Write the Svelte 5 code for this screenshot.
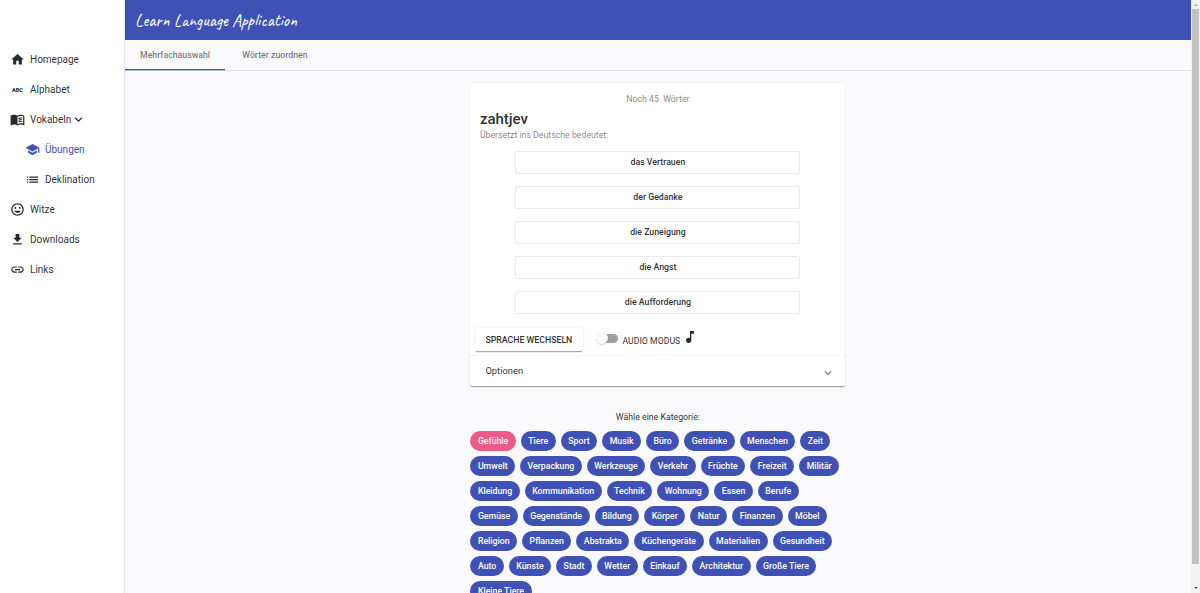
<script>
  const nav = [
    { label: 'Homepage', icon: 'home' },
    { label: 'Alphabet', icon: 'abc' },
    { label: 'Vokabeln', icon: 'book', open: true },
    { label: 'Übungen', icon: 'school', sub: true, active: true },
    { label: 'Deklination', icon: 'list', sub: true },
    { label: 'Witze', icon: 'smile' },
    { label: 'Downloads', icon: 'download' },
    { label: 'Links', icon: 'link' }
  ];
  const icons = {
    home: 'M10 20v-6h4v6h5v-8h3L12 3 2 12h3v8z',
    book: 'M21 5c-1.11-.35-2.33-.5-3.5-.5-1.95 0-4.05.4-5.5 1.5-1.45-1.1-3.55-1.5-5.5-1.5S2.450 4.900 1 6v14.650c0 .25.25.5.5.5.1 0 .15-.05.25-.05C3.100 20.450 5.050 20 6.500 20c1.950 0 4.050.4 5.500 1.500 1.350-.85 3.800-1.500 5.500-1.500 1.650 0 3.350.3 4.750 1.050.1.050.150.050.250.050.250 0 .5-.25.5-.5V6c-.6-.45-1.250-.75-2-1zm0 13.500c-1.100-.35-2.300-.5-3.500-.5-1.700 0-4.150.65-5.500 1.500V8c1.350-.85 3.800-1.500 5.500-1.500 1.200 0 2.400.15 3.500.5v11.500zM13.500 9.500c1.700-.8 4-1 6-.6V10.400c-2-.4-4.200-.1-6 .7zm0 2.700c1.700-.8 4-1 6-.6v1.500c-2-.4-4.200-.1-6 .7zm0 2.700c1.700-.8 4-1 6-.6v1.500c-2-.4-4.200-.1-6 .7z',
    school: 'M5 13.180v4L12 21l7-3.820v-4L12 17l-7-3.820zM12 3L1 9l11 6 9-4.910V17h2V9L12 3z',
    list: 'M3 13h2v-2H3v2zm0 4h2v-2H3v2zm0-8h2V7H3v2zm4 4h14v-2H7v2zm0 4h14v-2H7v2zM7 7v2h14V7H7z',
    smile: 'M11.990 2C6.470 2 2 6.480 2 12s4.470 10 9.990 10C17.520 22 22 17.520 22 12S17.520 2 11.990 2zM12 20c-4.420 0-8-3.580-8-8s3.580-8 8-8 8 3.580 8 8-3.580 8-8 8zm3.500-9c.83 0 1.500-.67 1.500-1.500S16.330 8 15.500 8 14 8.670 14 9.500s.67 1.500 1.500 1.500zm-7 0c.83 0 1.500-.67 1.500-1.500S9.330 8 8.500 8 7 8.670 7 9.500 7.670 11 8.500 11zm3.500 6.500c2.330 0 4.310-1.460 5.110-3.500H6.890c.8 2.040 2.780 3.500 5.110 3.500z',
    download: 'M19 9h-4V3H9v6H5l7 7 7-7zM5 18v2h14v-2H5z',
    link: 'M3.900 12c0-1.710 1.390-3.100 3.100-3.100h4V7H7c-2.760 0-5 2.240-5 5s2.240 5 5 5h4v-1.900H7c-1.710 0-3.100-1.390-3.100-3.100zM8 13h8v-2H8v2zm9-6h-4v1.900h4c1.710 0 3.100 1.390 3.100 3.100s-1.390 3.100-3.100 3.100h-4V17h4c2.760 0 5-2.240 5-5s-2.240-5-5-5z',
    expand: 'M16.590 8.590L12 13.170 7.410 8.590 6 10l6 6 6-6z',
    note: 'M12 3v10.550c-.59-.34-1.270-.55-2-.55-2.210 0-4 1.790-4 4s1.790 4 4 4 4-1.790 4-4V7h4V3h-6z'
  };
  const answers = ['das Vertrauen', 'der Gedanke', 'die Zuneigung', 'die Angst', 'die Aufforderung'];
  const categories = [
    'Gefühle', 'Tiere', 'Sport', 'Musik', 'Büro', 'Getränke', 'Menschen', 'Zeit',
    'Umwelt', 'Verpackung', 'Werkzeuge', 'Verkehr', 'Früchte', 'Freizeit', 'Militär',
    'Kleidung', 'Kommunikation', 'Technik', 'Wohnung', 'Essen', 'Berufe',
    'Gemüse', 'Gegenstände', 'Bildung', 'Körper', 'Natur', 'Finanzen', 'Möbel',
    'Religion', 'Pflanzen', 'Abstrakta', 'Küchengeräte', 'Materialien', 'Gesundheit',
    'Auto', 'Künste', 'Stadt', 'Wetter', 'Einkauf', 'Architektur', 'Große Tiere', 'Kleine Tiere'
  ];
  let selected = $state('Gefühle');
</script>

<div class="app">
  <nav class="side">
    {#each nav as item}
      <div class="item" class:sub={item.sub} class:active={item.active}>
        {#if item.icon === 'abc'}
          <span class="abc">ABC</span>
        {:else}
          <svg class="icon" viewBox="0 0 24 24"><path d={icons[item.icon]} /></svg>
        {/if}
        <span class="label">{item.label}</span>
        {#if item.open}
          <svg class="chevron" viewBox="0 0 24 24"><path d={icons.expand} /></svg>
        {/if}
      </div>
    {/each}
  </nav>

  <div class="main">
    <header><h1>Learn Language Application</h1></header>
    <div class="tabs">
      <div class="tab current">Mehrfachauswahl</div>
      <div class="tab">Wörter zuordnen</div>
    </div>

    <div class="content">
      <section class="card">
        <div class="remaining">Noch 45&nbsp; Wörter</div>
        <h2>zahtjev</h2>
        <div class="hint">Übersetzt ins Deutsche bedeutet:</div>
        <div class="answers">
          {#each answers as answer}
            <button class="answer">{answer}</button>
          {/each}
        </div>
        <div class="actions">
          <button class="switch-lang">SPRACHE WECHSELN</button>
          <span class="toggle"><span class="knob"></span></span>
          <span class="audio">AUDIO MODUS</span>
          <svg class="note" viewBox="0 0 24 24"><path d={icons.note} /></svg>
        </div>
      </section>
      <section class="options">
        <span>Optionen</span>
        <svg viewBox="0 0 24 24"><path d={icons.expand} /></svg>
      </section>
      <div class="choose">Wähle eine Kategorie:</div>
      <div class="chips">
        {#each categories as category}
          <button class="chip" class:selected={selected === category} onclick={() => (selected = category)}>{category}</button>
        {/each}
      </div>
    </div>
  </div>

  <div class="scrollbar">
    <span class="arrow up"></span>
    <span class="thumb"></span>
    <span class="arrow down"></span>
  </div>
</div>

<style>
  :global(body) { margin: 0; overflow: hidden; }
  .app {
    display: flex;
    height: 593px;
    overflow: hidden;
    background: #fafafc;
    color: rgba(0, 0, 0, 0.84);
    font-family: Roboto, sans-serif;
    font-size: 8.75px;
  }
  svg { display: block; fill: currentColor; flex: none; }
  button { border: 0; margin: 0; padding: 0; font: inherit; color: inherit; background: #fff; white-space: nowrap; }

  .side {
    box-sizing: border-box;
    width: 125px;
    flex: none;
    padding-top: 44.5px;
    background: #fff;
    border-right: 1px solid #e6e6ea;
  }
  .item {
    display: flex;
    align-items: center;
    height: 30px;
    padding-left: 10px;
    gap: 5px;
    font-size: 10px;
  }
  .item.sub { padding-left: 25px; }
  .item.active { color: #3f51b5; }
  .icon { width: 15px; height: 15px; }
  .abc {
    width: 15px;
    font-size: 5.5px;
    font-weight: 900;
    text-align: center;
  }
  .chevron { width: 15px; height: 15px; margin-left: -5px; }

  .main { flex: 1; min-width: 0; display: flex; flex-direction: column; }
  header {
    display: flex;
    align-items: center;
    flex: none;
    height: 40px;
    padding-left: 10px;
    background: #3f51b5;
    color: #fff;
  }
  h1 {
    margin: 0;
    font: 400 17.5px Caveat, cursive;
    white-space: nowrap;
  }
  .tabs {
    display: flex;
    flex: none;
    box-sizing: border-box;
    height: 31px;
    box-shadow: inset 0 -1px #e1e1e4;
  }
  .tab {
    box-sizing: border-box;
    width: 100px;
    height: 31px;
    line-height: 30px;
    text-align: center;
    font-weight: 500;
    color: rgba(0, 0, 0, 0.54);
  }
  .tab.current { box-shadow: inset 0 -1px #b5bbe2, inset 0 -2px #3f51b5; }

  .content { width: 375px; margin: 12px 0 0 345.4px; }
  .card {
    box-sizing: border-box;
    height: 273px;
    padding-top: 10px;
    background: #fff;
    border-radius: 2px;
    box-shadow: 0 0 1px rgba(0, 0, 0, 0.2);
  }
  .remaining {
    line-height: 13px;
    text-align: center;
    color: rgba(0, 0, 0, 0.5);
  }
  h2 {
    margin: 3px 0 0 9.5px;
    font-size: 15px;
    line-height: 20px;
    font-weight: 500;
  }
  .hint { margin-left: 9.5px; padding-top: 1px; line-height: 11px; color: rgba(0, 0, 0, 0.5); }
  .answers { display: flex; flex-direction: column; gap: 12px; padding: 9.5px 45px 0; }
  .answer {
    box-sizing: border-box;
    height: 23px;
    border: 1px solid #e8e8ee;
    border-radius: 2px;
    font-weight: 500;
  }
  .actions { display: flex; align-items: center; height: 23px; margin: 14.5px 0 0 4.5px; }
  .switch-lang {
    width: 108px;
    height: 23px;
    border-radius: 2.5px;
    font-weight: 500;
    box-shadow: 0 1.5px 1px -1px rgba(0, 0, 0, 0.22), 0 1px 1px rgba(0, 0, 0, 0.13), 0 0.5px 2.5px rgba(0, 0, 0, 0.1);
  }
  .toggle {
    display: flex;
    align-items: center;
    width: 20px;
    height: 9px;
    margin: -3px 4.5px 0 15px;
    border-radius: 5px;
    background: #9e9e9e;
  }
  .knob {
    width: 12px;
    height: 12px;
    margin-left: -2px;
    border-radius: 50%;
    background: #fafafa;
    box-shadow: 0 1px 1.5px rgba(0, 0, 0, 0.18);
  }
  .audio { padding-top: 2px; }
  .note { width: 16px; height: 16px; margin: -6px 0 0 1.5px; }

  .options {
    display: flex;
    align-items: center;
    justify-content: space-between;
    box-sizing: border-box;
    height: 30px;
    padding: 0 10.5px 0 15px;
    background: #fff;
    border-radius: 2.5px;
    box-shadow: 0 1.5px 1px -1px rgba(0, 0, 0, 0.22), 0 1px 1px rgba(0, 0, 0, 0.13), 0 0.5px 2px rgba(0, 0, 0, 0.12);
    font-size: 9.375px;
  }
  .options span { padding-bottom: 1.5px; }
  .options svg { width: 14px; height: 14px; color: rgba(0, 0, 0, 0.6); margin-top: 3px; }
  .choose { margin-top: 25px; line-height: 13px; text-align: center; }
  .chips { display: flex; flex-wrap: wrap; gap: 5px; margin-top: 7px; }
  .chip {
    height: 20px;
    padding: 0 7.5px;
    border-radius: 10px;
    background: #3f51b5;
    color: #fff;
    font-weight: 500;
  }
  .chip.selected { background: #ec5a88; }

  .scrollbar {
    display: flex;
    flex-direction: column;
    align-items: center;
    justify-content: space-between;
    flex: none;
    width: 9px;
    background: #f1f1f1;
  }
  .thumb { width: 7px; height: 555px; margin-bottom: auto; margin-top: 3px; background: #c1c1c1; }
  .arrow { width: 0; height: 0; border: 2px solid transparent; }
  .arrow.up { margin-top: 4px; border-bottom-color: #a3a3a3; border-top: 0; }
  .arrow.down { margin-bottom: 4px; border-top-color: #505050; border-bottom: 0; }
</style>
